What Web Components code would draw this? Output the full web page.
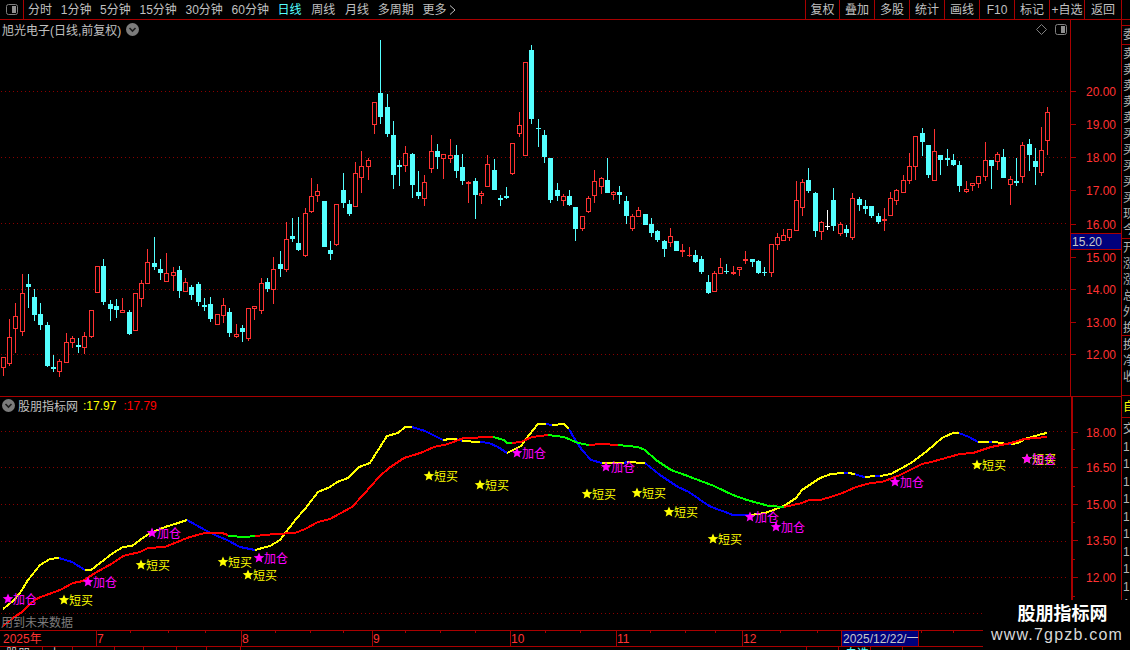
<!DOCTYPE html>
<html>
<head>
<meta charset="utf-8">
<title>旭光电子</title>
<style>
  html, body { margin: 0; height: 100%; background: #000; overflow: hidden; }
  body { font: 12px "Liberation Sans", "Noto Sans CJK SC", sans-serif; color: #c0c0c0; }
</style>
</head>
<body>
<kline-app>
  <tool-bar>
    <tool-tab slot="tabs">分时</tool-tab>
    <tool-tab slot="tabs">1分钟</tool-tab>
    <tool-tab slot="tabs">5分钟</tool-tab>
    <tool-tab slot="tabs">15分钟</tool-tab>
    <tool-tab slot="tabs">30分钟</tool-tab>
    <tool-tab slot="tabs">60分钟</tool-tab>
    <tool-tab slot="tabs" active>日线</tool-tab>
    <tool-tab slot="tabs" style="margin-left:1px">周线</tool-tab>
    <tool-tab slot="tabs" style="margin-left:1px">月线</tool-tab>
    <tool-tab slot="tabs">多周期</tool-tab>
    <tool-tab slot="tabs" more>更多</tool-tab>
    <tool-btn slot="btns" style="width:34px">复权</tool-btn>
    <tool-btn slot="btns">叠加</tool-btn>
    <tool-btn slot="btns">多股</tool-btn>
    <tool-btn slot="btns">统计</tool-btn>
    <tool-btn slot="btns">画线</tool-btn>
    <tool-btn slot="btns">F10</tool-btn>
    <tool-btn slot="btns">标记</tool-btn>
    <tool-btn slot="btns">+自选</tool-btn>
    <tool-btn slot="btns" last>返回</tool-btn>
  </tool-bar>
  <main-area>
    <chart-column>
      <stock-pane></stock-pane>
      <signal-pane></signal-pane>
      <date-bar></date-bar>
      <status-strip></status-strip>
    </chart-column>
    <side-strip></side-strip>
  </main-area>
  <water-mark></water-mark>
</kline-app>

<script>
const RED_LINE = "#a80000";
const GRID = "#8a0000";
const UP = "#ff3232";
const DOWN = "#54ffff";

function rect(x, y, w, h, fill) {
  return `<rect x="${x}" y="${y}" width="${w}" height="${h}" fill="${fill}"/>`;
}

// one pixel every four, like the terminal's dotted grid
function dotted(y, x2) {
  let d = "";
  for (let x = 1; x < x2; x += 4) d += `M${x} ${y}h1v1h-1z`;
  return `<path d="${d}" fill="${GRID}"/>`;
}

const panelIcon = `<svg width="12" height="11" viewBox="0 0 12 11"><rect x=".5" y=".5" width="11" height="10" rx="2" fill="none" stroke="#808080"/><rect x="6" y="2" width="4" height="7" fill="#909090"/></svg>`;
const chevronDisc = `<svg width="13" height="13" viewBox="0 0 13 13"><circle cx="6.5" cy="6.5" r="6.5" fill="#7c7c7c"/><path d="M3.5 5l3 3 3-3" fill="none" stroke="#1c1c1c" stroke-width="1.6"/></svg>`;

// candles read off the reference: [x, high, low, bodyTop, bodyBottom, colour], in zoomed px
const candleGroups = [
  { ox: 0, oy: 240, rows: [
    [10,352,408,352,383,"r"],[28,237,378,292,372,"r"],[46,190,338,229,268,"r"],[67,102,288,160,275,"r"],
    [85,102,203,132,141,"c"],[103,148,243,171,225,"c"],[121,190,270,222,255,"c"],[142,247,380,255,378,"c"],
    [160,345,396,381,387,"c"],[178,358,411,363,395,"r"],[199,280,369,307,368,"r"],[217,289,324,295,308,"r"],
    [235,294,339,315,321,"c"],[253,277,342,289,323,"r"],[274,210,294,211,290,"r"],[292,79,160,79,158,"r"],
    [310,57,195,78,186,"c"],[331,180,243,192,207,"c"],[349,178,234,198,210,"c"],[367,174,219,211,218,"r"],
    [388,210,285,216,282,"c"],[406,160,273,160,272,"r"],[424,120,201,130,176,"r"],[442,27,132,67,131,"r"],
    [463,-9,90,69,81,"c"],[481,57,120,87,99,"c"],[499,39,126,100,125,"r"],[520,81,153,97,107,"r"],
    [538,79,174,90,153,"c"],[556,114,156,127,155,"r"],[574,135,180,141,165,"c"],[595,126,198,132,186,"c"],
    [613,174,213,195,201,"c"],[631,171,246,192,237,"c"],[652,222,255,222,255,"r"],[670,174,249,195,227,"r"],
    [688,205,291,216,279,"c"],[709,252,294,283,290,"r"],[727,255,306,264,276,"c"],[745,205,303,205,296,"r"],
    [763,198,240,199,206,"r"],[784,114,222,130,212,"r"],[802,114,156,126,147,"c"],[820,51,192,88,150,"r"]
  ]},
  { ox: 270, oy: 170, rows: [
    [31,243,320,282,297,"c"],[49,156,305,208,299,"r"],[67,144,216,198,207,"c"],[85,141,243,219,240,"c"],
    [106,114,260,130,257,"r"],[124,24,129,79,126,"r"],[142,42,96,64,77,"r"],[163,93,231,93,231,"c"],
    [181,213,270,240,252,"c"],[199,102,228,102,225,"r"],[220,9,114,60,99,"c"],[238,90,138,102,132,"c"],
    [256,-24,111,9,111,"r"]
  ]},
  { ox: 360, oy: 30, rows: [
    [4,363,489,408,444,"r"],[25,384,450,390,411,"r"],[43,216,312,216,285,"r"],[61,30,282,189,261,"c"],
    [82,192,321,231,312,"c"],[100,273,477,315,435,"c"],[118,390,468,405,411,"c"],[136,348,426,370,408,"r"],
    [157,369,504,372,465,"c"],[175,423,507,486,498,"c"],[193,435,528,457,507,"r"],[214,315,429,364,417,"r"],
    [232,342,417,363,381,"c"],[250,373,447,373,387,"r"],[271,327,399,376,387,"r"],[289,345,444,375,423,"c"],
    [307,372,465,411,453,"c"],[325,453,519,456,462,"r"],[346,444,567,453,495,"c"],[364,483,522,489,498,"r"],
    [382,375,471,403,471,"r"],[403,387,480,420,480,"c"],[421,495,528,504,510,"c"],[439,471,507,498,504,"c"],
    [457,340,435,340,432,"r"],[478,246,321,286,312,"r"],[496,97,378,97,378,"r"],[514,45,282,60,267,"c"],
    [535,267,351,294,297,"c"],[553,300,399,315,381,"c"],[571,384,519,384,510,"c"],[592,459,513,480,498,"c"],
    [610,492,528,498,513,"r"],[628,480,528,498,525,"c"],[646,531,633,531,597,"c"],[667,558,603,558,597,"r"],
    [685,498,549,504,546,"r"],[703,420,519,453,498,"r"],[724,441,492,445,471,"r"],[742,384,489,450,489,"c"],
    [760,483,510,486,495,"r"],[778,468,522,486,495,"c"],[799,498,582,513,558,"c"],[817,552,603,558,597,"r"],
    [835,531,561,540,561,"r"],[856,552,585,552,585,"c"],[874,564,621,582,609,"c"],[892,600,636,603,630,"c"],
    [913,630,681,633,657,"c"],[931,594,651,618,639,"r"],[949,633,663,633,663,"c"],[967,642,681,660,666,"r"],
    [988,651,681,675,678,"r"],[1006,660,699,675,696,"c"],[1024,678,732,687,726,"c"]
  ]},
  { ox: 700, oy: 100, rows: [
    [25,525,582,546,579,"c"],[43,513,576,519,576,"r"],[61,474,522,501,522,"r"],[79,492,522,513,516,"c"],
    [100,498,525,516,522,"r"],[118,501,528,501,510,"r"],[136,453,492,477,483,"r"],[157,477,501,477,486,"c"],
    [175,480,522,483,519,"c"],[193,501,528,516,519,"c"],[214,432,531,432,519,"r"],[232,399,450,411,435,"r"],
    [250,387,423,405,423,"r"],[268,387,423,387,414,"r"],[289,243,393,300,393,"r"],[307,237,348,246,324,"r"],
    [325,204,279,240,273,"c"],[346,276,411,279,393,"c"],[364,363,420,366,396,"r"],[382,330,390,378,381,"w"],
    [400,264,393,300,378,"c"],[421,366,408,372,402,"r"],[439,375,411,387,399,"c"],[457,279,420,294,414,"r"],
    [478,291,333,297,315,"c"],[496,300,342,318,327,"c"],[514,318,354,318,348,"c"],[535,339,372,348,366,"c"],
    [553,324,393,357,363,"r"],[571,276,348,294,348,"r"],[589,267,315,270,303,"r"],[610,225,279,240,279,"r"],
    [628,159,252,198,243,"r"],[646,108,240,108,201,"r"],[667,84,168,99,126,"c"],[685,135,234,135,225,"c"],
    [703,87,243,153,243,"r"],[721,165,225,165,180,"c"],[742,147,198,174,180,"c"],[760,162,198,180,195,"c"],
    [778,183,276,195,258,"c"],[799,243,279,267,276,"r"],[817,249,273,249,258,"r"],[835,228,264,228,252,"r"],
    [856,126,243,180,231,"r"],[874,180,267,180,198,"c"],[892,156,210,162,186,"r"],[910,147,234,171,234,"c"],
    [931,228,315,237,255,"r"],[949,174,258,243,249,"c"],[967,126,249,135,231,"r"],[988,117,213,132,165,"c"],
    [1006,144,255,183,201,"c"],[1024,81,228,150,219,"r"],[1042,21,165,36,123,"r"]
  ]}
];

function candleSvg() {
  let out = "";
  for (const g of candleGroups) {
    for (const [zx, hi, lo, top, bot, kind] of g.rows) {
      const x = Math.floor(g.ox + zx / 3);
      const yHi = Math.round(g.oy + hi / 3);
      const yLo = Math.round(g.oy + lo / 3);
      const yTop = Math.round(g.oy + top / 3);
      const yBot = Math.max(Math.round(g.oy + bot / 3), yTop + 1);
      const color = kind === "r" ? UP : kind === "c" ? DOWN : "#ffffff";
      out += rect(x, yHi, 1, yTop - yHi, color) + rect(x, yBot, 1, Math.max(yLo - yBot, 0), color);
      if (kind === "r" && yBot - yTop > 2) {
        out += `<rect x="${x - 1.5}" y="${yTop + 0.5}" width="4" height="${yBot - yTop - 1}" fill="#000" stroke="${color}"/>`;
      } else {
        out += rect(x - 2, yTop, 5, yBot - yTop, color);
      }
    }
  }
  return out;
}

const Y = "#ffff00", B = "#0000ff", R = "#ff0000", G = "#00ff00";

const shortLine = [
  [Y, "3,609 13,601 20,593 28,580 40,565 50,559 59,558"],
  [B, "59,558 72,562 85,570"],
  [Y, "85,570 91,570 113,553 123,547 132,546 140,540 150,533 165,527 175,524 187,520"],
  [B, "187,520 205,530 215,535 227,540 240,547 255,550"],
  [Y, "255,550 270,546 280,540 296,519 305,509 318,492 330,487 337,482 348,478 359,467 370,463 375,455 387,436 398,433 405,427 412,427"],
  [B, "412,427 425,431 443,440"],
  [Y, "443,440 450,439 457,439"],
  [B, "457,439 462,441"],
  [Y, "462,441 480,442"],
  [B, "480,442 489,443 498,447 507,453"],
  [Y, "507,453 521,446 529,435 538,424 546,424"],
  [B, "546,424 552,425"],
  [Y, "552,425 564,424 569,429"],
  [B, "569,429 574,438 582,450 591,460 602,463"],
  [Y, "602,463 624,463"],
  [B, "624,463 627,462"],
  [Y, "627,462 645,463"],
  [B, "645,463 660,475 678,487 689,492 709,506 725,512 733,515 751,515"],
  [Y, "751,515 765,513 784,506 796,498 802,490 820,478 831,474 844,473"],
  [B, "844,473 848,473"],
  [Y, "848,473 855,474"],
  [B, "855,474 860,476 865,477"],
  [Y, "865,477 875,476"],
  [B, "875,476 880,476"],
  [Y, "880,476 891,474 911,463 927,451 942,438 953,433 959,433"],
  [B, "959,433 969,437 978,442"],
  [Y, "978,442 989,442"],
  [B, "989,442 992,442"],
  [Y, "992,442 1004,443"],
  [B, "1004,444 1011,444"],
  [Y, "1011,444 1018,443 1025,439 1042,434 1047,433"]
];

const longLine = [
  [R, "3,626 13,618 22,612 30,604 38,598 60,590 73,583 83,581 95,573 113,563 123,556 140,552 148,548 165,547 182,540 190,537 205,533 222,533 228,535"],
  [G, "228,536 245,537 255,536"],
  [R, "255,536 275,534 295,533 305,529 318,522 330,519 352,507 364,494 379,477 389,468 404,458 414,455 423,452 434,447 448,444 461,439 464,438 493,437"],
  [G, "493,437 504,440 507,443 512,443"],
  [R, "512,443 521,442 532,437 548,435"],
  [G, "548,435 564,437 578,443 589,445"],
  [R, "589,445 602,444 618,445"],
  [G, "618,445 638,447 645,450 656,460 671,470 685,475 714,486 733,495 747,500 769,506 784,507"],
  [R, "784,507 802,503 809,500 820,500 834,496 845,492 856,487 871,483 882,482 900,475 922,464 931,462 960,454 973,453 991,447 1011,443 1024,439 1047,437"]
];

const buySignals = [[64,600],[141,565],[223,562],[248,575],[429,476],[480,485],[587,494],[637,493],[669,512],[713,539],[977,465],[1027,459]];
const addSignals = [[8,599],[88,582],[152,533],[259,558],[517,453],[606,467],[750,517],[776,527],[895,482],[1027,459]];

function star(cx, cy, color) {
  let pts = [];
  for (let i = 0; i < 10; i++) {
    const r = i % 2 ? 2.5 : 5.6;
    const a = -Math.PI / 2 + (i * Math.PI) / 5;
    pts.push(`${(cx + r * Math.cos(a)).toFixed(1)},${(cy + r * Math.sin(a)).toFixed(1)}`);
  }
  return `<polygon points="${pts.join(" ")}" fill="${color}"/>`;
}

function signal(list, label, color) {
  return list.map(([x, y]) =>
    star(x, y, color) + `<text x="${x + 5}" y="${y + 5}" fill="${color}">${label}</text>`).join("");
}

function lineSvg(segments) {
  return segments.map(([color, pts]) =>
    `<polyline points="${pts}" fill="none" stroke="${color}" stroke-width="2" shape-rendering="crispEdges"/>`).join("");
}

class ToolTab extends HTMLElement {
  constructor() {
    super();
    const arrow = this.hasAttribute("more")
      ? `<svg width="7" height="10" viewBox="0 0 7 10"><path d="M1 .5l5 4.5-5 4.5" fill="none" stroke="#c0c0c0"/></svg>` : "";
    this.attachShadow({ mode: "open" }).innerHTML = `
      <style>
        :host { display: flex; align-items: center; gap: 3px; color: #c0c0c0; white-space: nowrap; padding-top: 1px; }
        :host([active]) { color: #54ffff; }
      </style>
      <slot></slot>${arrow}`;
  }
}
customElements.define("tool-tab", ToolTab);

class ToolBtn extends HTMLElement {
  constructor() {
    super();
    this.attachShadow({ mode: "open" }).innerHTML = `
      <style>
        :host {
          display: flex; align-items: center; justify-content: center; box-sizing: border-box;
          width: 35px; padding-top: 1px; border-left: 1px solid ${RED_LINE}; white-space: nowrap; color: #c0c0c0;
        }
        :host([last]) { width: 38px; border-right: 1px solid ${RED_LINE}; }
      </style>
      <slot></slot>`;
  }
}
customElements.define("tool-btn", ToolBtn);

const barTemplate = document.createElement("template");
barTemplate.innerHTML = `
  <style>
    :host {
      display: flex; flex: none; height: 20px; box-sizing: border-box; padding-right: 8px;
      border-bottom: 1px solid ${RED_LINE}; line-height: 19px;
    }
    .toggle {
      width: 24px; box-sizing: border-box; border-right: 1px solid ${RED_LINE};
      display: flex; align-items: center; justify-content: center;
    }
    .tabs { display: flex; gap: 8.7px; padding-left: 4px; }
    .btns { display: flex; margin-left: auto; }
  </style>
  <div class="toggle">${panelIcon}</div>
  <div class="tabs"><slot name="tabs"></slot></div>
  <div class="btns"><slot name="btns"></slot></div>`;

class ToolBar extends HTMLElement {
  constructor() {
    super();
    this.attachShadow({ mode: "open" }).appendChild(barTemplate.content.cloneNode(true));
  }
}
customElements.define("tool-bar", ToolBar);

class StockPane extends HTMLElement {
  constructor() {
    super();
    const axisLabels = [[20,91],[19,124],[18,157],[17,190],[16,224],[15,257],[14,289],[13,322],[12,354]];
    const ticks = axisLabels.map(([, y]) => rect(1071, y, 5, 1, RED_LINE)).join("");
    const labels = axisLabels.map(([p, y]) =>
      `<text x="1086" y="${y + 5}" fill="${UP}">${p}.00</text>`).join("");
    const grid = [91, 157, 223, 289, 354].map((y) => dotted(y, 1068)).join("");
    this.attachShadow({ mode: "open" }).innerHTML = `
      <style>
        :host { display: flex; flex: none; height: 377px; box-sizing: border-box; border-bottom: 1px solid ${RED_LINE}; }
        .left { width: 1070px; display: flex; flex-direction: column; }
        header { display: flex; align-items: center; height: 20px; box-sizing: border-box; padding: 0 3px 2px 2px; flex: none; }
        .name { color: #c0c0c0; margin-right: 5px; white-space: nowrap; }
        .tools { margin-left: auto; display: flex; align-items: center; gap: 8px; }
        svg.plot { display: block; flex: 1; }
        svg.axis { display: block; width: 51px; flex: none; font: 12px "Liberation Sans", sans-serif; }
      </style>
      <div class="left">
        <header>
          <span class="name">旭光电子(日线,前复权)</span>${chevronDisc}
          <span class="tools">
            <svg width="11" height="11" viewBox="0 0 11 11"><path d="M5.5 .5l5 5-5 5-5-5z" fill="none" stroke="#808080"/></svg>
            ${panelIcon}
          </span>
        </header>
        <svg class="plot" viewBox="0 40 1070 356" width="1070" height="356" shape-rendering="crispEdges">${grid}${candleSvg()}</svg>
      </div>
      <svg class="axis" viewBox="1070 20 51 376" width="51" height="376">
        <g shape-rendering="crispEdges">${rect(1070, 20, 1, 376, RED_LINE)}${ticks}
          <rect x="1071" y="233" width="50" height="16" fill="#00007c"/>
          ${rect(1071, 233, 50, 1, RED_LINE)}${rect(1071, 249, 50, 1, RED_LINE)}
        </g>
        ${labels}
        <text x="1072" y="246" fill="#c8c8c8">15.20</text>
      </svg>`;
  }
}
customElements.define("stock-pane", StockPane);

class SignalPane extends HTMLElement {
  constructor() {
    super();
    const axisLabels = [["18.00",432],["16.50",467],["15.00",504],["13.50",540],["12.00",577]];
    const majors = axisLabels.map(([, y]) => rect(1073, y, 5, 1, RED_LINE)).join("");
    const minors = [449, 486, 522, 559, 596].map((y) => rect(1073, y, 2, 1, RED_LINE)).join("");
    const labels = axisLabels.map(([p, y]) =>
      `<text x="1086" y="${y + 5}" fill="${UP}">${p}</text>`).join("");
    const grid = [431, 467, 504, 541, 577, 613].map((y) => dotted(y, 1068)).join("");
    this.attachShadow({ mode: "open" }).innerHTML = `
      <style>
        :host { display: flex; flex: none; height: 233px; }
        .left { width: 1070px; display: flex; flex-direction: column; }
        header { display: flex; align-items: center; height: 16px; flex: none; padding: 1px 0 0 2px; box-sizing: border-box; white-space: nowrap; }
        .name { margin-left: 3px; color: #c0c0c0; }
        .yel { color: #ffff00; margin-left: 5px; }
        .red { color: #ff0000; margin-left: 7px; }
        svg.plot { display: block; flex: 1; font: 12px "Liberation Sans", "Noto Sans CJK SC", sans-serif; }
        svg.axis { display: block; width: 51px; flex: none; font: 12px "Liberation Sans", sans-serif; }
      </style>
      <div class="left">
        <header>${chevronDisc}<span class="name">股朋指标网</span><span class="yel">:17.97</span><span class="red">:17.79</span></header>
        <svg class="plot" viewBox="0 413 1070 217" width="1070" height="217">
          <g shape-rendering="crispEdges">${grid}</g>
          ${lineSvg(shortLine)}${lineSvg(longLine)}
          ${signal(buySignals, "短买", Y)}
          ${signal(addSignals, "加仓", "#ff00ff")}
          <text x="1" y="627" fill="#7c7c7c">用到未来数据</text>
        </svg>
      </div>
      <svg class="axis" viewBox="1070 397 51 233" width="51" height="233">
        <g shape-rendering="crispEdges">${rect(1071, 397, 2, 233, RED_LINE)}${majors}${minors}</g>
        ${labels}
      </svg>`;
  }
}
customElements.define("signal-pane", SignalPane);

class DateBar extends HTMLElement {
  constructor() {
    super();
    const marks = [["2025年",3],["7",97],["8",242],["9",373],["10",511],["11",617],["12",743]];
    const full = [96, 241, 372, 510, 616, 742].map((x) => rect(x, 631, 1, 15, RED_LINE)).join("");
    const small = [130,168,205,275,310,343,405,440,475,545,580,650,685,715,780,817,921,953]
      .map((x) => rect(x, 631, 1, 2, RED_LINE)).join("");
    const labels = marks.map(([t, x]) => `<text x="${x}" y="643" fill="${UP}">${t}</text>`).join("");
    this.attachShadow({ mode: "open" }).innerHTML = `
      <style>
        :host { display: block; flex: none; height: 17px; }
        svg { display: block; font: 12px "Liberation Sans", "Noto Sans CJK SC", sans-serif; }
      </style>
      <svg viewBox="0 630 1121 17" width="1121" height="17">
        <g shape-rendering="crispEdges">
          ${rect(0, 630, 1121, 1, RED_LINE)}${rect(0, 646, 1121, 1, RED_LINE)}${full}${small}
          <rect x="841" y="631" width="78" height="15" fill="#00007c"/>
          ${rect(841, 631, 1, 15, RED_LINE)}${rect(918, 631, 1, 15, RED_LINE)}
        </g>
        ${labels}
        <text x="843" y="643" fill="#c8c8c8">2025/12/22/一</text>
      </svg>`;
  }
}
customElements.define("date-bar", DateBar);

class StatusStrip extends HTMLElement {
  constructor() {
    super();
    const cells = [[43,"股朋"],[30,"上"],[42,""],[29,""],[33,""],[30,""],[34,""]];
    let html = cells.map(([w, t]) => `<span style="width:${w}px">${t}</span>`).join("");
    html += `<span style="width:${807 - 241}px"></span><span style="width:32px"></span><span style="width:32px;color:#54ffff">自选</span><span style="width:32px"></span>`;
    this.attachShadow({ mode: "open" }).innerHTML = `
      <style>
        :host { display: flex; flex: none; height: 3px; overflow: hidden; font-size: 12px; line-height: 14px; }
        span { box-sizing: border-box; flex: none; height: 3px; padding-left: 6px; border-right: 1px solid ${RED_LINE}; color: #d0d0d0; }
      </style>${html}`;
  }
}
customElements.define("status-strip", StatusStrip);

class SideStrip extends HTMLElement {
  constructor() {
    super();
    const rows = (chars) => chars.split("").map((c) => `<div>${c}</div>`).join("");
    this.attachShadow({ mode: "open" }).innerHTML = `
      <style>
        :host {
          display: flex; flex-direction: column; width: 9px; flex: none; box-sizing: border-box;
          border-left: 1px solid ${RED_LINE}; overflow: hidden; color: #b4b4b4; line-height: 16px;
        }
        section { box-sizing: border-box; border-bottom: 1px solid ${RED_LINE}; padding-left: 1px; overflow: hidden; flex: none; }
        section div { height: 16px; white-space: nowrap; }
        .ticks div { height: 17.5px; line-height: 18px; }
      </style>
      <section style="height:6px"></section>
      <section style="height:19px;padding-top:1px">${rows("委")}</section>
      <section style="height:194px;padding-top:1px">${rows("卖卖卖卖卖买买买买买现今")}</section>
      <section style="height:97px;padding-top:1px">${rows("开涨涨总外换")}</section>
      <section style="height:60px;padding-top:1px">${rows("换净收")}</section>
      <section style="height:22px;color:#ffff00;padding-top:3px">${rows("自")}</section>
      <section class="ticks" style="border:0;padding-top:2px">${rows("交1111111111")}</section>`;
  }
}
customElements.define("side-strip", SideStrip);

class WaterMark extends HTMLElement {
  constructor() {
    super();
    this.attachShadow({ mode: "open" }).innerHTML = `
      <style>
        :host {
          position: absolute; right: 0; bottom: 0; width: 147px; height: 50px; background: #000;
          display: flex; flex-direction: column; align-items: center; box-sizing: border-box;
          padding-left: 9px; font-family: "Liberation Sans", "Noto Sans CJK SC", sans-serif;
        }
        .name { font-size: 18px; font-weight: bold; color: #fff; line-height: 26px; margin-top: 1px; margin-left: 3px; white-space: nowrap; }
        .url { font-size: 16px; color: #d8d8d8; letter-spacing: 1.2px; line-height: 16px; margin-left: -8px; white-space: nowrap; }
      </style>
      <div class="name">股朋指标网</div>
      <div class="url">www.7gpzb.com</div>`;
  }
}
customElements.define("water-mark", WaterMark);

class ChartColumn extends HTMLElement {
  constructor() {
    super();
    this.attachShadow({ mode: "open" }).innerHTML = `
      <style>:host { display: flex; flex-direction: column; width: 1121px; flex: none; }</style><slot></slot>`;
  }
}
customElements.define("chart-column", ChartColumn);

class MainArea extends HTMLElement {
  constructor() {
    super();
    this.attachShadow({ mode: "open" }).innerHTML = `
      <style>:host { display: flex; flex: 1; min-height: 0; }</style><slot></slot>`;
  }
}
customElements.define("main-area", MainArea);

class KlineApp extends HTMLElement {
  constructor() {
    super();
    this.attachShadow({ mode: "open" }).innerHTML = `
      <style>
        :host { display: flex; flex-direction: column; position: relative; width: 1130px; height: 650px; overflow: hidden; background: #000; }
      </style><slot></slot>`;
  }
}
customElements.define("kline-app", KlineApp);
</script>
</body>
</html>
